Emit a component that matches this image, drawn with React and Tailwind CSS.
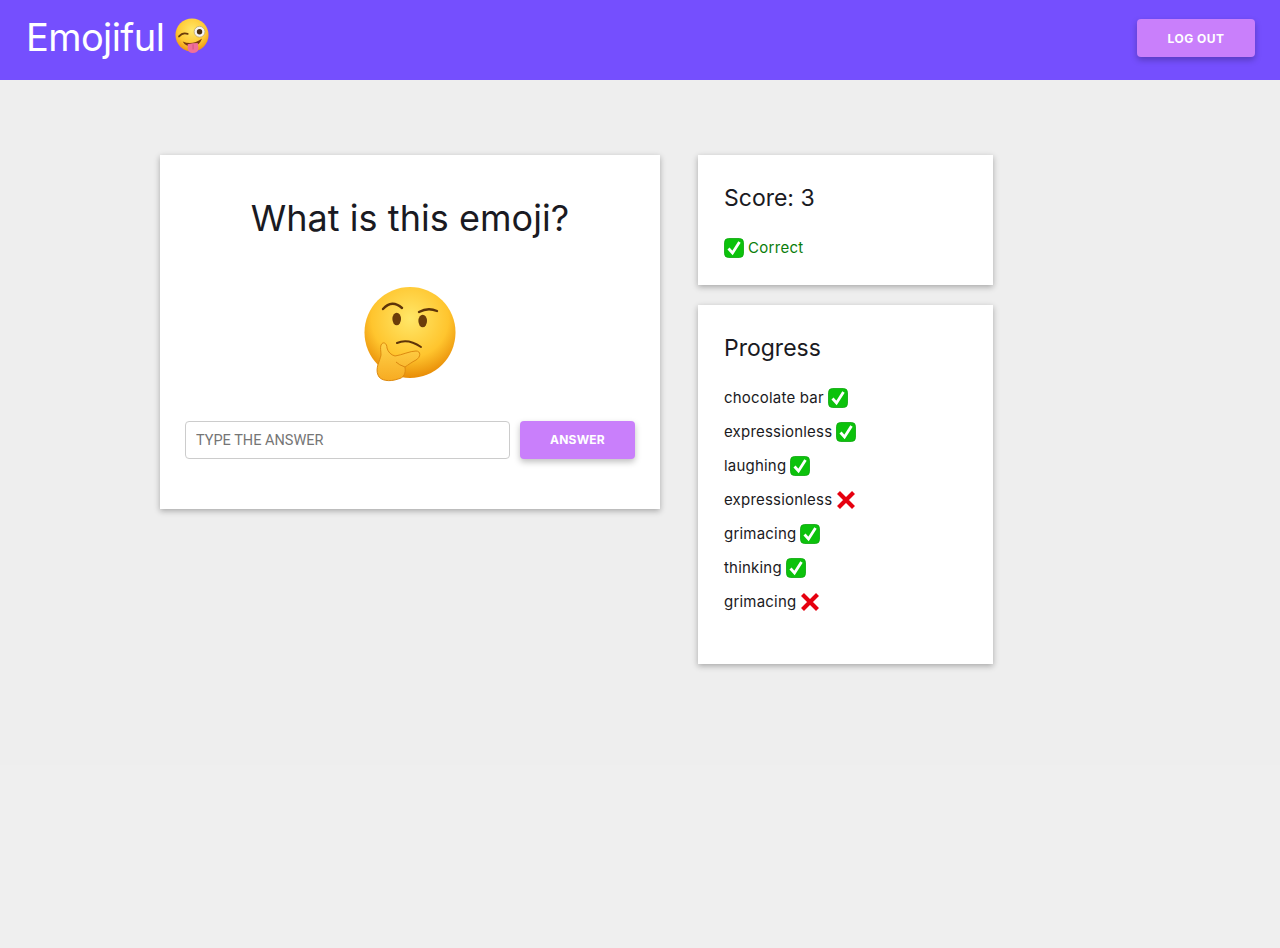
const WinkEmoji = () => (
  <svg width="36" height="36" viewBox="0 0 100 100" className="-mt-1 shrink-0">
    <defs>
      <radialGradient id="winkFace" cx="50%" cy="35%" r="65%">
        <stop offset="0%" stopColor="#ffe768" />
        <stop offset="65%" stopColor="#ffc933" />
        <stop offset="100%" stopColor="#ee9410" />
      </radialGradient>
    </defs>
    <circle cx="50" cy="50" r="46" fill="url(#winkFace)" />
    <path d="M14 54 Q24 42 38 47" fill="none" stroke="#6b3d0a" strokeWidth="5" strokeLinecap="round" />
    <circle cx="71" cy="41" r="15" fill="#f4f4f4" stroke="#b8a26a" strokeWidth="2" />
    <circle cx="71" cy="41" r="7.5" fill="#4a2f10" />
    <path d="M24 68 Q50 80 78 60 Q70 82 50 82 Q32 82 24 68 Z" fill="#7a3b12" />
    <path d="M38 76 Q52 72 66 72 L68 88 Q66 100 52 100 Q40 100 38 88 Z" fill="#f0709a" />
    <path d="M53 76 L53 90" stroke="#c94a78" strokeWidth="2" />
  </svg>
);

const ThinkingEmoji = () => (
  <svg width="100" height="100" viewBox="0 0 100 100">
    <defs>
      <radialGradient id="thinkFace" cx="50%" cy="35%" r="65%">
        <stop offset="0%" stopColor="#ffe768" />
        <stop offset="65%" stopColor="#ffc52e" />
        <stop offset="100%" stopColor="#e88c06" />
      </radialGradient>
      <linearGradient id="thinkHand" x1="0" y1="0" x2="0" y2="1">
        <stop offset="0%" stopColor="#ffd34a" />
        <stop offset="100%" stopColor="#f7ab22" />
      </linearGradient>
    </defs>
    <circle cx="50" cy="49.5" r="45.5" fill="url(#thinkFace)" />
    <ellipse cx="36.7" cy="36" rx="4.3" ry="6.3" fill="#6b3d0a" />
    <ellipse cx="62.7" cy="38" rx="4.3" ry="6.3" fill="#6b3d0a" />
    <path d="M23 26 Q32 16 42 25" fill="none" stroke="#5e3409" strokeWidth="2.4" strokeLinecap="round" />
    <path d="M59 29 Q68 24 77 28" fill="none" stroke="#5e3409" strokeWidth="2.4" strokeLinecap="round" />
    <path d="M37 60 Q48 55 61 64" fill="none" stroke="#5e3409" strokeWidth="2" strokeLinecap="round" />
    <path
      d="M21 62 C23 58 27 60 27 65 C28 69 31 72 35 73 C42 72 50 68 56 68 C61 68 61 74 56 77 C52 79 48 82 45 84 C46 90 44 95 38 96 C30 99 20 98 18 92 C15 85 20 78 21 72 C21 68 20 65 21 62 Z"
      fill="url(#thinkHand)"
      stroke="#dd8a10"
      strokeWidth="1"
    />
    <path d="M45 84 Q39 82 36 79" fill="none" stroke="#d98510" strokeWidth="1" />
  </svg>
);

const Check = () => (
  <svg width="20" height="20" viewBox="0 0 20 20" className="-mt-px shrink-0">
    <rect x="0.5" y="0.5" width="19" height="19" rx="4" fill="#0cc20c" stroke="#0aa60a" strokeWidth="0.8" />
    <path d="M4.5 10.5 L8.5 15 L15.5 4" fill="none" stroke="#fff" strokeWidth="2.8" />
  </svg>
);

const Cross = () => (
  <svg width="20" height="20" viewBox="0 0 20 20" className="-mt-px shrink-0">
    <path d="M2.5 2.5 L17.5 17.5 M17.5 2.5 L2.5 17.5" stroke="#e6000f" strokeWidth="4.2" />
  </svg>
);

const progress = [
  ['chocolate bar', true],
  ['expressionless', true],
  ['laughing', true],
  ['expressionless', false],
  ['grimacing', true],
  ['thinking', true],
  ['grimacing', false],
];

export default function App() {
  return (
    <div className="min-h-[948px] bg-[#efefef] font-['Inter',sans-serif] text-[#1a1a22]">
      <header className="flex h-20 items-center justify-between bg-[#754ffe] pl-[26px] pr-[25px]">
        <div className="mb-[6px] flex items-center gap-[10px]">
          <h1 className="text-[38px] leading-none font-normal tracking-[-0.6px] text-white">Emojiful</h1>
          <WinkEmoji />
        </div>
        <button className="mb-1 h-[38px] w-[118px] rounded-[4px] bg-[#c97ffb] pt-px text-[12px] font-bold tracking-[0.5px] text-white shadow-[0_3px_6px_rgba(0,0,0,0.25)]">
          LOG OUT
        </button>
      </header>

      <main className="flex h-[685px] items-start gap-[38px] bg-[#eeeeee] pt-[75px] pl-40">
        <section className="flex h-[354px] w-[500px] flex-col items-center bg-white px-[25px] pt-[42px] shadow-[0_2px_6px_rgba(0,0,0,0.3)]">
          <h2 className="text-[36px] leading-[42px] font-normal tracking-[0.05px]">What is this emoji?</h2>
          <div className="mt-[44px]">
            <ThinkingEmoji />
          </div>
          <form className="mt-[38px] flex w-full gap-[10px]">
            <input
              placeholder="TYPE THE ANSWER"
              className="h-[38px] flex-1 rounded-[4px] border border-[#cccccc] bg-white px-[10px] pt-px font-['Roboto',sans-serif] text-[14.5px] placeholder:text-[#757575]"
            />
            <button
              type="button"
              className="h-[38px] w-[115px] rounded-[4px] bg-[#c97ffb] text-[12px] font-bold tracking-[0.2px] text-white shadow-[0_3px_6px_rgba(0,0,0,0.25)]"
            >
              ANSWER
            </button>
          </form>
        </section>

        <div className="flex w-[295px] flex-col gap-5">
          <section className="h-[130px] bg-white px-[26px] pt-[28px] shadow-[0_2px_6px_rgba(0,0,0,0.3)]">
            <h3 className="text-[23px] leading-[30px] font-normal">Score: 3</h3>
            <div className="mt-[25px] flex items-center gap-1 text-[15px] leading-5 tracking-[0.3px] text-[#0a7d0a]">
              <Check />
              <span>Correct</span>
            </div>
          </section>

          <section className="h-[359px] bg-white px-[26px] pt-[28px] shadow-[0_2px_6px_rgba(0,0,0,0.3)]">
            <h3 className="text-[23px] leading-[30px] font-normal">Progress</h3>
            <ul className="mt-[25px] flex flex-col gap-[14px] text-[15px] leading-5 tracking-[0.2px]">
              {progress.map(([name, ok], i) => (
                <li key={i} className="flex items-center gap-1">
                  <span>{name}</span>
                  {ok ? <Check /> : <Cross />}
                </li>
              ))}
            </ul>
          </section>
        </div>
      </main>
    </div>
  );
}
